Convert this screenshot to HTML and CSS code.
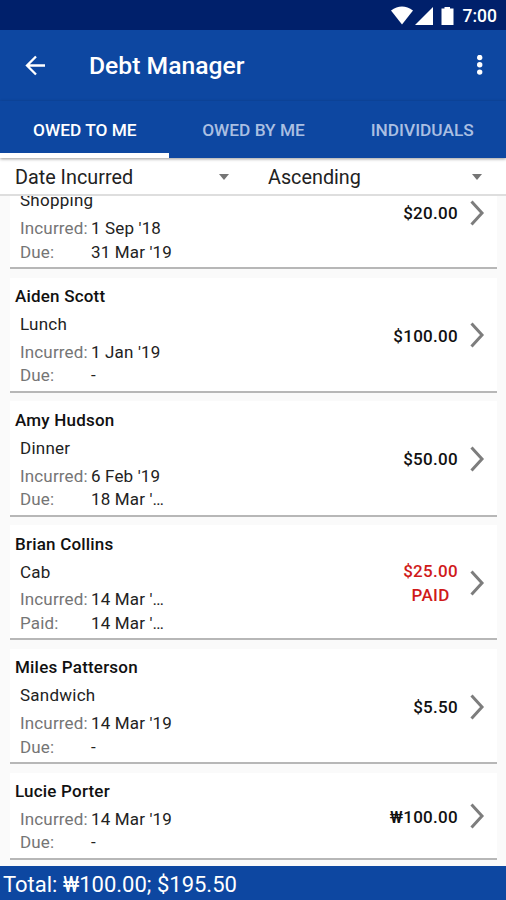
FILE: index.html
```html
<!DOCTYPE html>
<html lang="en">
<head>
<meta charset="utf-8">
<title>Debt Manager</title>
<link rel="stylesheet" href="styles.css">
</head>
<body>
<div class="status">
  <svg class="signals" width="66" height="20" viewBox="0 0 66 20" fill="#fff"><path d="M0 4.500Q11-3.500 22 4.500L11 18.500Z"/><path d="M42 1V19H24Z"/><path d="M50.500 2.500H53.500V1H59V2.500H62.500V19H50.500Z"/></svg>
  <span class="clock">7:00</span>
</div>
<header class="appbar">
  <svg class="back" width="22" height="22" viewBox="0 0 22 22" fill="none" stroke="#fff" stroke-width="2.300"><path d="M21 10.500H3M12 1.500L3 10.500L12 19.500"/></svg>
  <h1 class="title">Debt Manager</h1>
  <svg class="more" width="6" height="22" viewBox="0 0 6 22" fill="#fff"><circle cx="2.700" cy="2.500" r="2.700"/><circle cx="2.700" cy="9.800" r="2.700"/><circle cx="2.700" cy="17.100" r="2.700"/></svg>
</header>
<nav class="tabs">
  <span class="tab active">OWED TO ME</span>
  <span class="tab">OWED BY ME</span>
  <span class="tab">INDIVIDUALS</span>
</nav>
<div class="sort">
  <div class="select"><span class="by-date">Date Incurred</span><i class="caret"></i></div>
  <div class="select"><span class="order">Ascending</span><i class="caret"></i></div>
</div>
<main class="list">
  <article class="card">
    <div class="info"><p class="item">Shopping</p>
      <dl><dt>Incurred:</dt><dd>1 Sep '18</dd><dt>Due:</dt><dd>31 Mar '19</dd></dl></div>
    <div class="amount first">$20.00</div>
    <svg class="chev first" width="15" height="26" viewBox="0 0 15 26"><path d="M1.500 1.500L12 13L1.500 24.500"/></svg>
  </article>
  <article class="card">
    <div class="info"><h2>Aiden Scott</h2><p class="item">Lunch</p>
      <dl><dt>Incurred:</dt><dd>1 Jan '19</dd><dt>Due:</dt><dd>-</dd></dl></div>
    <div class="amount">$100.00</div>
    <svg class="chev" width="15" height="26" viewBox="0 0 15 26"><path d="M1.500 1.500L12 13L1.500 24.500"/></svg>
  </article>
  <article class="card">
    <div class="info"><h2>Amy Hudson</h2><p class="item">Dinner</p>
      <dl><dt>Incurred:</dt><dd>6 Feb '19</dd><dt>Due:</dt><dd>18 Mar '…</dd></dl></div>
    <div class="amount">$50.00</div>
    <svg class="chev" width="15" height="26" viewBox="0 0 15 26"><path d="M1.500 1.500L12 13L1.500 24.500"/></svg>
  </article>
  <article class="card">
    <div class="info"><h2>Brian Collins</h2><p class="item">Cab</p>
      <dl><dt>Incurred:</dt><dd>14 Mar '…</dd><dt>Paid:</dt><dd>14 Mar '…</dd></dl></div>
    <div class="amount paid">$25.00<br>PAID</div>
    <svg class="chev" width="15" height="26" viewBox="0 0 15 26"><path d="M1.500 1.500L12 13L1.500 24.500"/></svg>
  </article>
  <article class="card">
    <div class="info"><h2>Miles Patterson</h2><p class="item">Sandwich</p>
      <dl><dt>Incurred:</dt><dd>14 Mar '19</dd><dt>Due:</dt><dd>-</dd></dl></div>
    <div class="amount">$5.50</div>
    <svg class="chev" width="15" height="26" viewBox="0 0 15 26"><path d="M1.500 1.500L12 13L1.500 24.500"/></svg>
  </article>
  <article class="card">
    <div class="info"><h2>Lucie Porter</h2>
      <dl><dt>Incurred:</dt><dd>14 Mar '19</dd><dt>Due:</dt><dd>-</dd></dl></div>
    <div class="amount">₩100.00</div>
    <svg class="chev" width="15" height="26" viewBox="0 0 15 26"><path d="M1.500 1.500L12 13L1.500 24.500"/></svg>
  </article>
</main>
<footer class="total">Total: ₩100.00; $195.50</footer>
</body>
</html>
```
FILE: styles.css
```css
* { box-sizing: border-box; }
body {
  margin: 0;
  width: 506px;
  height: 900px;
  display: flex;
  flex-direction: column;
  overflow: hidden;
  background: #fafafa;
  color: #111;
  font-family: Roboto, "Liberation Sans", sans-serif;
}
h1, h2, p, dl, dd { margin: 0; }

.status {
  height: 30px;
  flex: none;
  display: flex;
  align-items: center;
  justify-content: flex-end;
  gap: 6px;
  padding: 1px 9px 0 0;
  background: #00206b;
  color: #fff;
}
.clock { font-size: 17.5px; font-weight: 500; }

.appbar {
  height: 71px;
  flex: none;
  display: flex;
  align-items: center;
  padding: 0 23px 0 24px;
  background: #0d47a1;
  color: #fff;
}
.title { flex: 1; margin-left: 43px; font-size: 24.700px; font-weight: 500; }

.tabs {
  height: 57px;
  flex: none;
  display: grid;
  grid-template-columns: repeat(3, 1fr);
  background: #0d47a1;
  box-shadow: 0 1px 3px rgba(0, 0, 0, .4);
  position: relative;
  z-index: 2;
}
.tab {
  display: flex;
  align-items: center;
  justify-content: center;
  border-bottom: 5px solid transparent;
  padding: 5px 0 0 1px;
  color: #aabfe2;
  font-size: 17.300px;
  font-weight: 500;
}
.tab.active { color: #fff; border-color: #fff; }

.sort {
  height: 38px;
  flex: none;
  display: grid;
  grid-template-columns: 1fr 1fr;
  background: #fff;
  border-bottom: 2px solid #dedede;
  position: relative;
  z-index: 1;
}
.select {
  display: flex;
  align-items: center;
  justify-content: space-between;
  padding: 3px 24px 0 15px;
  font-size: 19.800px;
  color: #222;
}
.caret {
  border: 5.5px solid transparent;
  border-top: 6px solid #757575;
  border-bottom: 0;
  margin-top: -2px;
}

.list { flex: 1; min-height: 0; overflow: hidden; padding: 0 9px 0 10px; }
.card {
  display: flex;
  align-items: center;
  background: #fff;
  padding: 4.400px 12px 3.200px 5px;
  border-bottom: 2px solid #b7b7b7;
  margin-bottom: 8.400px;
}
.card:first-child { margin-top: -14.200px; }
.info { flex: 1; }
h2 { font-size: 17px; line-height: 28px; font-weight: 500; letter-spacing: .2px; }
.item { padding-left: 5px; font-size: 17px; line-height: 28px; letter-spacing: .25px; color: #222; }
dl {
  display: grid;
  grid-template-columns: 71px auto;
  margin-top: 2.800px;
  padding-left: 5px;
  font-size: 17px;
  line-height: 23.500px;
  letter-spacing: .15px;
  color: #222;
}
dt { color: #757575; }
.amount {
  padding-top: 3px;
  font-size: 17px;
  line-height: 23.500px;
  font-weight: 500;
  letter-spacing: .3px;
  text-align: center;
}
.paid { color: #d01a1a; }
.chev { margin: 1px 0 0 12px; fill: none; stroke: #7d7d7d; stroke-width: 3; }
.first { position: relative; top: -13px; }

.total {
  height: 34px;
  flex: none;
  padding: 1px 3px 0;
  line-height: 35px;
  font-size: 22px;
  background: #0d47a1;
  color: #fff;
}
```
